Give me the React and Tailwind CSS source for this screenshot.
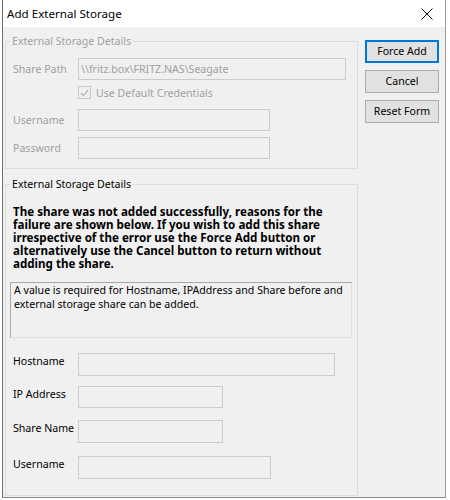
const font = "font-['Noto_Sans',sans-serif]";

function Field({ label, width, height = 'h-[22px]', disabled, value, className = '' }) {
  return (
    <div className={`flex items-start ${className}`}>
      <div
        className={`w-[72px] shrink-0 pl-[7px] text-[10.6px] leading-[14px] ${
          disabled ? 'pt-[4px] text-[#a0a0a0]' : 'pt-[1px] text-black'
        }`}
      >
        {label}
      </div>
      <div
        className={`${width} ${height} border border-[#cccccc] bg-[#f0f0f0] pl-[2px] text-[10.6px] leading-[20px] text-[#a0a0a0]`}
      >
        {value}
      </div>
    </div>
  );
}

export default function App() {
  return (
    <div className={`w-[450px] h-[500px] bg-white ${font}`}>
      <div className="ml-[2px] w-[444px] h-[498px] flex flex-col border-l border-r border-b border-l-[#6e6e6e] border-r-[#9a9a9a] border-b-[#8a8a8a] bg-[#f0f0f0]">
        {/* Title bar */}
        <div className="h-[27px] shrink-0 bg-white flex items-center justify-between pl-[4px] pr-[9px]">
          <span className="text-[11.6px] text-black">Add External Storage</span>
          <svg width="12" height="12" viewBox="0 0 12 12" className="mr-[3px]">
            <path d="M0.5 0.5 L11.5 11.5 M11.5 0.5 L0.5 11.5" stroke="#111" strokeWidth="1" />
          </svg>
        </div>

        <div className="flex flex-1">
          {/* Left column */}
          <div className="ml-[2px] w-[353px] flex flex-col">
            <fieldset className="mt-[7px] border border-[#dcdcdc] pb-[9px]">
              <legend className="ml-[4px] px-[2px] text-[10.6px] leading-[14px] text-[#a0a0a0]">
                External Storage Details
              </legend>
              <Field
                className="mt-[10px]"
                label="Share Path"
                width="w-[268px]"
                disabled
                value="\\fritz.box\FRITZ.NAS\Seagate"
              />
              <div className="mt-[6px] ml-[72px] flex items-center h-[13px]">
                <div className="w-[13px] h-[13px] border border-[#c8c8c8] bg-[#f0f0f0] flex items-center justify-center">
                  <svg width="9" height="8" viewBox="0 0 9 8">
                    <path d="M0.8 4 L3.4 6.6 L8.2 0.8" fill="none" stroke="#b0b0b0" strokeWidth="1.2" />
                  </svg>
                </div>
                <span className="ml-[5px] text-[10.6px] leading-[14px] text-[#a0a0a0]">
                  Use Default Credentials
                </span>
              </div>
              <Field className="mt-[10px]" label="Username" width="w-[192px]" disabled />
              <Field className="mt-[6px]" label="Password" width="w-[192px]" disabled />
            </fieldset>

            <fieldset className="mt-[8px] mb-[1px] flex-1 border border-[#dcdcdc]">
              <legend className="ml-[4px] px-[2px] text-[10.6px] leading-[14px] text-black">
                External Storage Details
              </legend>
              <p className="mt-[14px] pl-[7px] text-[11.6px] font-bold leading-[13px] text-black">
                The share was not added successfully, reasons for the
                <br />
                failure are shown below. If you wish to add this share
                <br />
                irrespective of the error use the Force Add button or
                <br />
                alternatively use the Cancel button to return without
                <br />
                adding the share.
              </p>
              <div className="mt-[12px] ml-[4px] w-[342px] h-[56px] border border-t-[#a8a8a8] border-l-[#a8a8a8] border-r-[#dedede] border-b-[#dedede] pl-[3px] text-[10.6px] leading-[14px] text-black">
                A value is required for Hostname, IPAddress and Share before and
                <br />
                external storage share can be added.
              </div>
              <Field className="mt-[15px]" label="Hostname" width="w-[257px]" height="h-[23px]" />
              <Field className="mt-[10px]" label="IP Address" width="w-[145px]" />
              <Field className="mt-[12px]" label="Share Name" width="w-[145px]" height="h-[23px]" />
              <Field className="mt-[13px]" label="Username" width="w-[193px]" height="h-[23px]" />
            </fieldset>
          </div>

          {/* Buttons */}
          <div className="ml-[7px] mt-[13px] flex flex-col gap-[7px] text-[10.6px] text-black">
            <button className="w-[74px] h-[23px] border-2 border-[#0078d7] bg-[#e1e1e1] leading-[19px]">
              Force Add
            </button>
            <button className="w-[74px] h-[23px] border border-[#adadad] bg-[#e1e1e1] leading-[21px]">
              Cancel
            </button>
            <button className="w-[74px] h-[23px] border border-[#adadad] bg-[#e1e1e1] leading-[21px]">
              Reset Form
            </button>
          </div>
        </div>
      </div>
    </div>
  );
}
